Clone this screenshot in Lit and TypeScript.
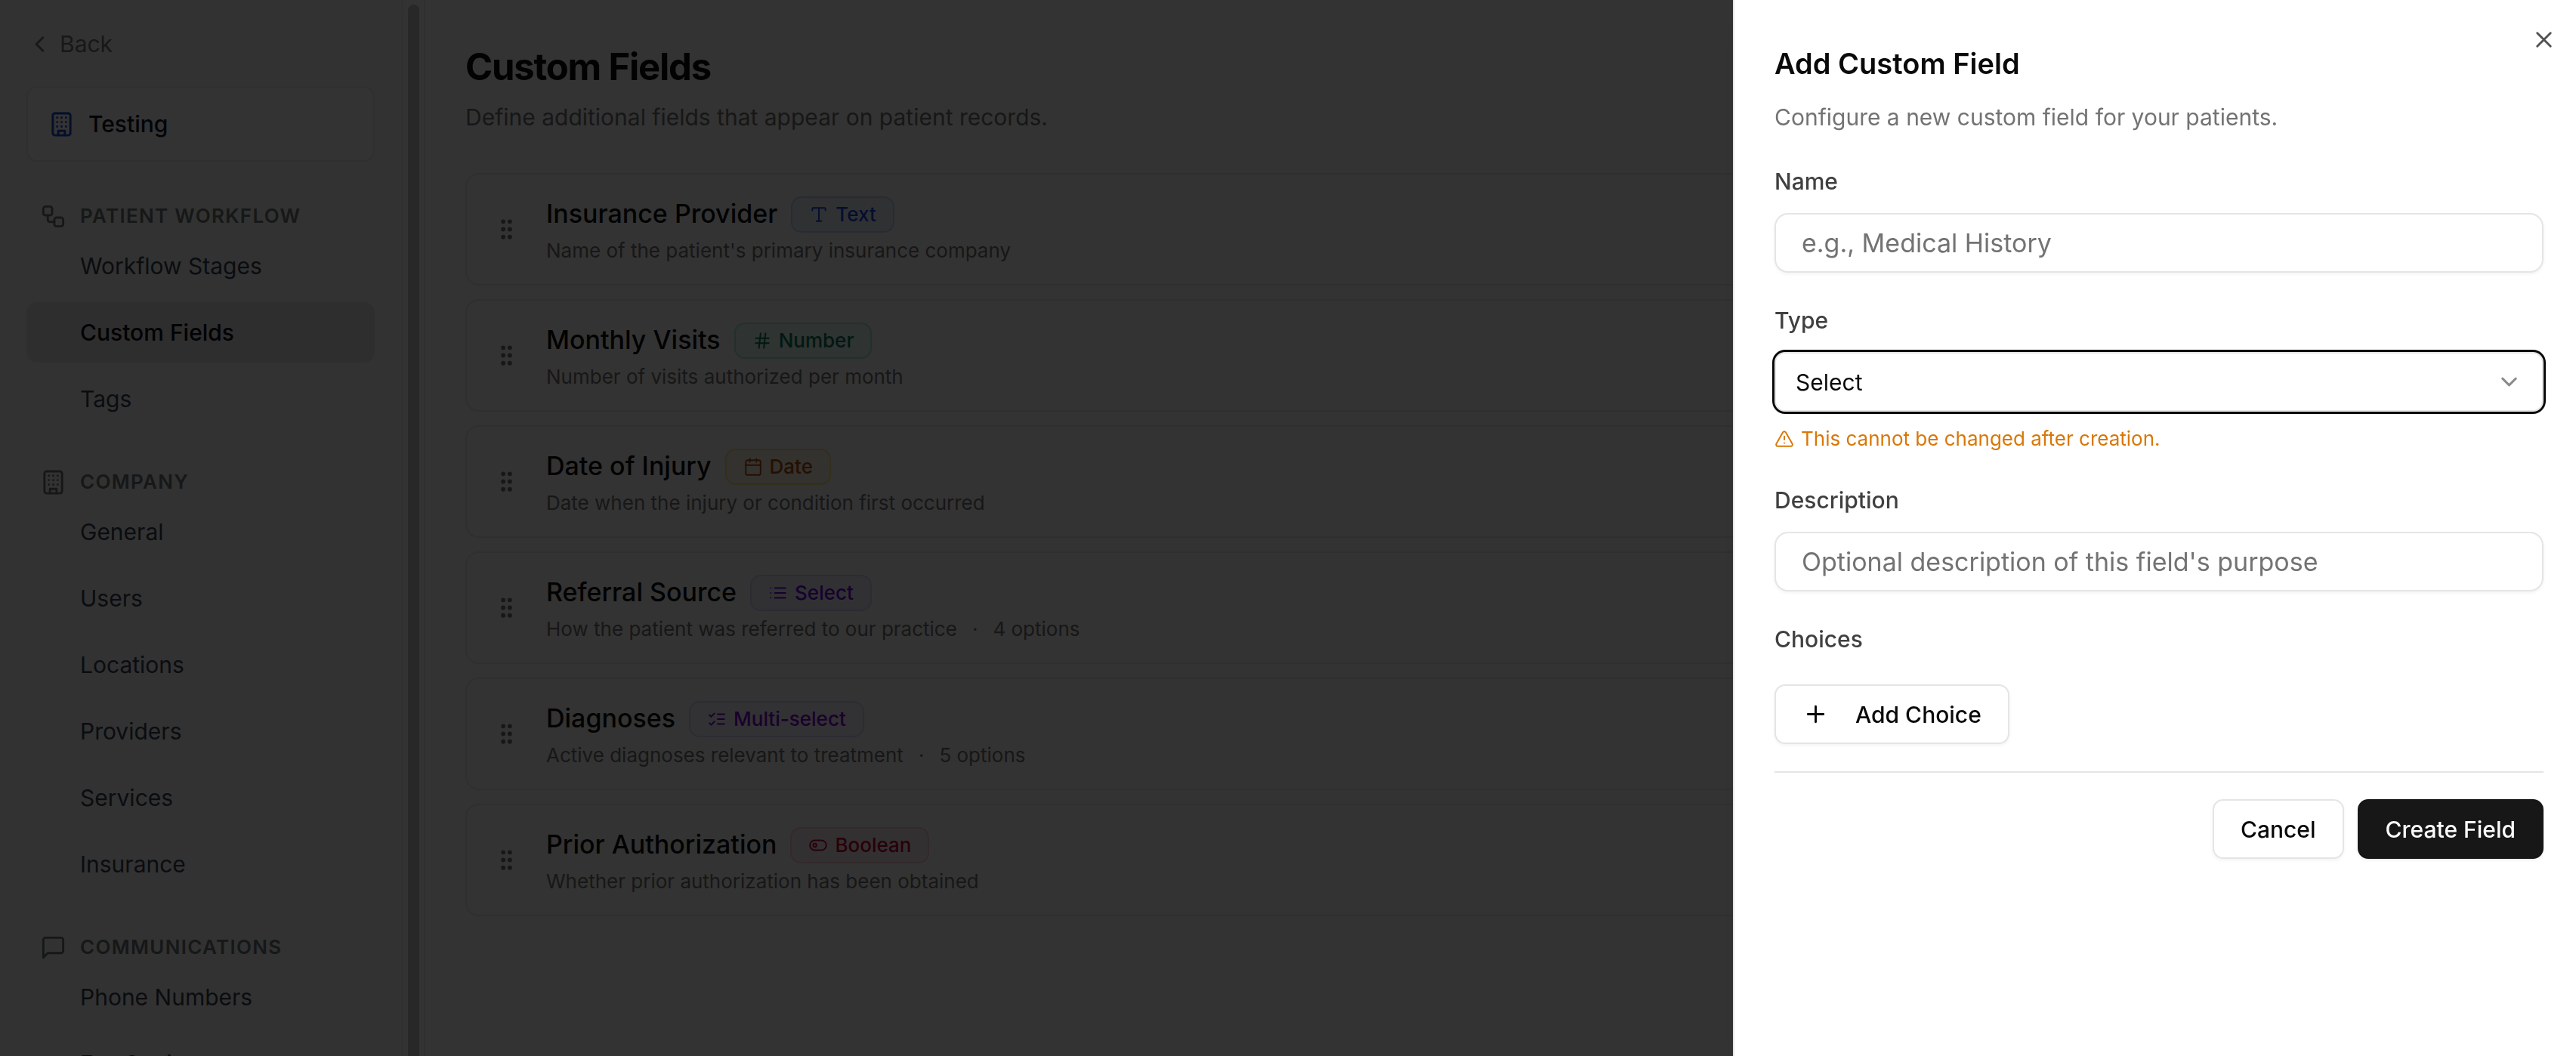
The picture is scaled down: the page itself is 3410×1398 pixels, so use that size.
import { LitElement, html, css, svg } from "lit";
import { customElement, property } from "lit/decorators.js";

const icons: Record<string, unknown> = {
  back: svg`<path d="m15 18-6-6 6-6"/>`,
  down: svg`<path d="m6 9 6 6 6-6"/>`,
  close: svg`<path d="M18 6 6 18M6 6l12 12"/>`,
  plus: svg`<path d="M5 12h14M12 5v14"/>`,
  building: svg`<rect width="16" height="20" x="4" y="2" rx="2"/><path d="M9 22v-4h6v4M8 6h.01M16 6h.01M12 6h.01M12 10h.01M12 14h.01M16 10h.01M16 14h.01M8 10h.01M8 14h.01"/>`,
  workflow: svg`<rect width="8" height="8" x="3" y="3" rx="2"/><path d="M7 11v4a2 2 0 0 0 2 2h4"/><rect width="8" height="8" x="13" y="13" rx="2"/>`,
  message: svg`<path d="M21 15a2 2 0 0 1-2 2H7l-4 4V5a2 2 0 0 1 2-2h14a2 2 0 0 1 2 2z"/>`,
  grip: svg`<circle cx="9" cy="12" r="1"/><circle cx="9" cy="5" r="1"/><circle cx="9" cy="19" r="1"/><circle cx="15" cy="12" r="1"/><circle cx="15" cy="5" r="1"/><circle cx="15" cy="19" r="1"/>`,
  text: svg`<path d="M4 7V5a1 1 0 0 1 1-1h14a1 1 0 0 1 1 1v2M9 20h6M12 4v16"/>`,
  number: svg`<path d="M4 9h16M4 15h16M10 3 8 21M16 3l-2 18"/>`,
  date: svg`<path d="M8 2v4M16 2v4"/><rect width="18" height="18" x="3" y="4" rx="2"/><path d="M3 10h18"/>`,
  select: svg`<path d="M8 6h13M8 12h13M8 18h13M3 6h.01M3 12h.01M3 18h.01"/>`,
  multi: svg`<path d="m3 17 2 2 4-4M3 7l2 2 4-4M13 6h8M13 12h8M13 18h8"/>`,
  boolean: svg`<rect width="20" height="12" x="2" y="6" rx="6"/><circle cx="8" cy="12" r="2"/>`,
  warning: svg`<path d="m21.73 18-8-14a2 2 0 0 0-3.48 0l-8 14A2 2 0 0 0 4 21h16a2 2 0 0 0 1.73-3M12 9v4M12 17h.01"/>`,
};

const icon = (name: string, cls = "") => html`<svg class="icon ${cls}" viewBox="0 0 24 24" aria-hidden="true">${icons[name]}</svg>`;

const shared = css`
  *, *::before, *::after { box-sizing: border-box; }
  h1, h2, h3, p, ul { margin: 0; padding: 0; }
  ul { list-style: none; }
  a { color: inherit; text-decoration: none; }
  button, input, select { font: inherit; color: inherit; margin: 0; }
  .icon {
    width: 35px; height: 35px; flex: none; display: block;
    fill: none; stroke: currentColor; stroke-width: 2;
    stroke-linecap: round; stroke-linejoin: round;
  }
  .icon.small { width: 26px; height: 26px; stroke-width: 1.8; }
`;

const sections = [
  { title: "Patient Workflow", icon: "workflow", items: ["Workflow Stages", "Custom Fields", "Tags"] },
  { title: "Company", icon: "building", items: ["General", "Users", "Locations", "Providers", "Services", "Insurance"] },
  { title: "Communications", icon: "message", items: ["Phone Numbers", "Fax Settings"] },
];

@customElement("settings-sidebar")
class SettingsSidebar extends LitElement {
  @property() current = "Custom Fields";

  static styles = [shared, css`
    :host { display: flex; flex: none; width: 563px; background: #fafafa; overflow: hidden; }
    .body { flex: 1; min-width: 0; padding: 36px 36px 0 35px; }
    .back { display: flex; align-items: center; gap: 9px; height: 44px; color: #737878; }
    .org {
      display: flex; align-items: center; gap: 18px; height: 100px; margin-top: 34px; padding: 0 27px;
      border: 2px solid #e8e8e8; border-radius: 14px; background: #fcfcfc; color: #101828; font-weight: 500;
    }
    .org .icon { color: #1d4ed8; }
    nav { display: flex; flex-direction: column; gap: 44px; padding-top: 46px; }
    h3 {
      display: flex; align-items: center; gap: 18px; height: 52px; padding-left: 18px;
      color: #6f7777; font-size: 26px; font-weight: 600; letter-spacing: 0.05em; text-transform: uppercase;
    }
    ul { display: flex; flex-direction: column; gap: 8px; }
    .item { display: flex; align-items: center; height: 80px; padding-left: 71px; border-radius: 14px; color: #364153; }
    .item.active { background: #e4e4e4; color: #0b0b18; font-weight: 500; }
    .track { flex: none; width: 31px; padding: 6px 6px 0; background: #fcfcfc; border: solid #ececec; border-width: 0 2px; }
    .thumb { height: 100%; border-radius: 8px 8px 0 0; background: #c6c6c6; }
  `];

  render() {
    return html`
      <div class="body">
        <a class="back" href="#">${icon("back")}Back</a>
        <div class="org">${icon("building")}Testing</div>
        <nav aria-label="Settings">
          ${sections.map((s) => html`
            <section>
              <h3>${icon(s.icon)}${s.title}</h3>
              <ul>
                ${s.items.map((i) => html`<li><a class="item ${i === this.current ? "active" : ""}" href="#">${i}</a></li>`)}
              </ul>
            </section>`)}
        </nav>
      </div>
      <div class="track"><div class="thumb"></div></div>
    `;
  }
}

const fields = [
  { name: "Insurance Provider", type: "text", label: "Text", info: "Name of the patient's primary insurance company" },
  { name: "Monthly Visits", type: "number", label: "Number", info: "Number of visits authorized per month" },
  { name: "Date of Injury", type: "date", label: "Date", info: "Date when the injury or condition first occurred" },
  { name: "Referral Source", type: "select", label: "Select", info: "How the patient was referred to our practice", options: 4 },
  { name: "Diagnoses", type: "multi", label: "Multi-select", info: "Active diagnoses relevant to treatment", options: 5 },
  { name: "Prior Authorization", type: "boolean", label: "Boolean", info: "Whether prior authorization has been obtained" },
];

@customElement("field-list")
class FieldList extends LitElement {
  static styles = [shared, css`
    :host { display: block; flex: 1; min-width: 0; padding: 58px 53px; background: #fff; color: #0a0a0a; }
    h1 { font-size: 49px; line-height: 62px; font-weight: 700; letter-spacing: -0.025em; }
    .lead { margin-top: 13px; line-height: 44px; color: #737373; }
    ul { display: flex; flex-direction: column; gap: 18px; margin-top: 52px; }
    .card { display: flex; align-items: center; gap: 35px; padding: 26px 35px; border: 2px solid #e8e8e8; border-radius: 18px; }
    .grip { color: #737373; }
    .row { display: flex; align-items: center; gap: 18px; height: 53px; }
    h2 { font-size: 34px; font-weight: 500; }
    .info { display: flex; gap: 20px; margin-top: 4px; font-size: 26px; line-height: 36px; color: #737373; }
    .badge {
      display: flex; align-items: center; gap: 9px; height: 48px; padding: 0 22px;
      border: 2px solid; border-radius: 14px; font-size: 26px; font-weight: 500;
    }
    .text { color: #1447e6; background: #eff6ff; border-color: #bedbff; }
    .number { color: #007a55; background: #ecfdf5; border-color: #a4f4cf; }
    .date { color: #bb4d00; background: #fffbeb; border-color: #fee685; }
    .select { color: #7008e7; background: #f5f3ff; border-color: #ddd6ff; }
    .multi { color: #8200db; background: #f8f5ff; border-color: #e4d6ff; }
    .boolean { color: #c70036; background: #fff1f2; border-color: #ffccd3; }
  `];

  render() {
    return html`
      <h1>Custom Fields</h1>
      <p class="lead">Define additional fields that appear on patient records.</p>
      <ul>
        ${fields.map((f) => html`
          <li class="card">
            ${icon("grip", "grip")}
            <div>
              <div class="row">
                <h2>${f.name}</h2>
                <span class="badge ${f.type}">${icon(f.type, "small")}${f.label}</span>
              </div>
              <p class="info"><span>${f.info}</span>${f.options ? html`<span>·</span><span>${f.options} options</span>` : ""}</p>
            </div>
          </li>`)}
      </ul>
    `;
  }
}

@customElement("field-sheet")
class FieldSheet extends LitElement {
  static styles = [shared, css`
    :host {
      display: block; width: min(1116px, 100%); overflow: auto; background: #fff; color: #0a0a0a;
      border-left: 2px solid #e5e5e5;
      box-shadow: 0 20px 30px -6px rgba(0, 0, 0, 0.1), 0 8px 12px -8px rgba(0, 0, 0, 0.1);
    }
    header { display: flex; align-items: flex-start; padding: 35px 25px 0 53px; }
    .heading { flex: 1; padding-top: 25px; }
    h2 { font-size: 38px; line-height: 48px; font-weight: 600; }
    .lead { margin-top: 25px; line-height: 44px; color: #737373; }
    .close { padding: 0; border: 0; background: none; color: #525252; }
    form { display: flex; flex-direction: column; padding: 45px 43px 53px 53px; }
    .fields { display: flex; flex-direction: column; gap: 45px; }
    .field { display: flex; flex-direction: column; align-items: flex-start; }
    .label { margin-bottom: 24px; line-height: 36px; font-weight: 500; color: #404040; }
    .input {
      width: 100%; height: 79px; padding: 0 34px; font-size: 34px; outline: 0; background: #fff;
      border: 2px solid #e5e5e5; border-radius: 18px; box-shadow: 0 2px 4px rgba(0, 0, 0, 0.05);
    }
    .input::placeholder { color: #737373; opacity: 1; }
    .picker { display: grid; width: 100%; align-items: center; }
    .picker > * { grid-area: 1 / 1; }
    .picker select {
      appearance: none; width: 100%; height: 79px; padding: 0 26px; background: #fff; outline: 0;
      border: 2px solid #e5e5e5; border-radius: 14px; box-shadow: 0 0 0 3px #0a0a0a;
    }
    .picker .icon { justify-self: end; margin-right: 28px; color: #8a8a8a; pointer-events: none; }
    .warning { display: flex; align-items: center; gap: 9px; margin-top: 18px; font-size: 26px; line-height: 36px; color: #d97706; }
    .button {
      display: flex; align-items: center; justify-content: center; gap: 35px; height: 79px; padding: 0 35px;
      border: 2px solid #e5e5e5; border-radius: 14px; background: #fff; font-weight: 500;
      box-shadow: 0 2px 4px rgba(0, 0, 0, 0.05);
    }
    .choices .label { margin-bottom: 42px; }
    .primary { border-color: #171717; background: #171717; color: #fafafa; }
    footer { display: flex; justify-content: flex-end; gap: 18px; margin-top: 36px; padding-top: 35px; border-top: 2px solid #e5e5e5; }
  `];

  render() {
    return html`
      <header>
        <div class="heading">
          <h2>Add Custom Field</h2>
          <p class="lead">Configure a new custom field for your patients.</p>
        </div>
        <button class="close" aria-label="Close">${icon("close")}</button>
      </header>
      <form>
        <div class="fields">
          <div class="field">
            <label class="label" for="name">Name</label>
            <input class="input" id="name" placeholder="e.g., Medical History">
          </div>
          <div class="field">
            <label class="label" for="type">Type</label>
            <div class="picker">
              <select id="type">
                ${fields.map((f) => html`<option ?selected=${f.type === "select"}>${f.label}</option>`)}
              </select>
              ${icon("down")}
            </div>
            <p class="warning">${icon("warning", "small")}This cannot be changed after creation.</p>
          </div>
          <div class="field">
            <label class="label" for="description">Description</label>
            <input class="input" id="description" placeholder="Optional description of this field's purpose">
          </div>
          <div class="field choices">
            <span class="label">Choices</span>
            <button class="button" type="button">${icon("plus")}Add Choice</button>
          </div>
        </div>
        <footer>
          <button class="button" type="button">Cancel</button>
          <button class="button primary" type="button">Create Field</button>
        </footer>
      </form>
    `;
  }
}

@customElement("app-root")
class AppRoot extends LitElement {
  static styles = [shared, css`
    :host {
      display: flex; height: 100vh; overflow: hidden;
      font-family: Inter, "Liberation Sans", sans-serif; font-size: 30px; line-height: 1.2;
    }
    .overlay { position: fixed; inset: 0; display: flex; justify-content: flex-end; background: rgba(0, 0, 0, 0.8); }
  `];

  render() {
    return html`
      <settings-sidebar></settings-sidebar>
      <field-list></field-list>
      <div class="overlay"><field-sheet role="dialog" aria-label="Add Custom Field"></field-sheet></div>
    `;
  }
}
